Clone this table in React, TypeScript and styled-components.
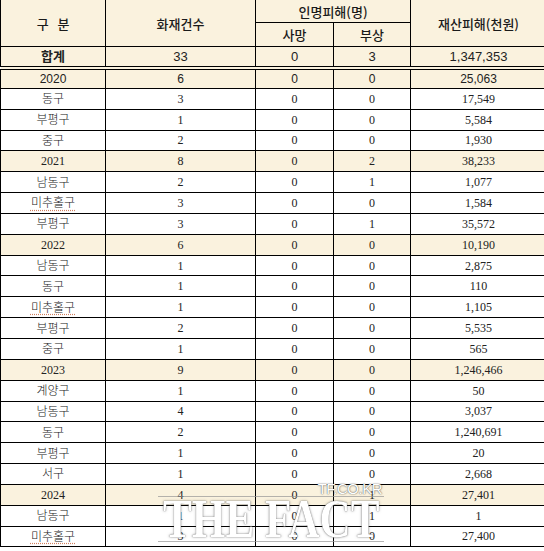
import React from "react";
import styled, { createGlobalStyle } from "styled-components";

const Global = createGlobalStyle`
  html, body { margin: 0; padding: 0; background: #ffffff; }
  body { width: 544px; height: 551px; overflow: hidden; }
`;

const Page = styled.div`
  position: relative;
  width: 544px;
  height: 551px;
  overflow: hidden;
  background: #fff;
`;

const Table = styled.table`
  border-collapse: collapse;
  table-layout: fixed;
  width: 546px;
  margin-left: 0;
  margin-top: -1px;
  font-family: "Liberation Serif", "Noto Sans CJK KR", serif;
  color: #222;
`;

const HeadCell = styled.th`
  background: #faf2de;
  border: 1px solid #000;
  font-family: "Noto Sans CJK KR", "Noto Sans", sans-serif;
  font-weight: 500;
  font-size: 13px;
  color: #1a1a1a;
  text-align: center;
  vertical-align: middle;
  padding: 0;
  line-height: 1;
  white-space: nowrap;
`;

const Row = styled.tr<{ $tone: "total" | "year" | "plain"; $double?: boolean }>`
  height: ${(p) => (p.$tone === "total" ? "21px" : "20.85px")};
  background: ${(p) => (p.$tone === "plain" ? "#ffffff" : "#faf2de")};
  & > td {
    border-bottom: ${(p) => (p.$double ? "4px double #000" : "1px solid #000")};
  }
`;

const Cell = styled.td<{ $sans?: boolean; $size?: number }>`
  border: 1px solid #000;
  padding: 0;
  text-align: center;
  vertical-align: middle;
  line-height: 1;
  white-space: nowrap;
  font-size: ${(p) => p.$size ?? 12}px;
  font-weight: 400;
  font-family: ${(p) =>
    p.$sans
      ? `"Liberation Sans", "Noto Sans CJK KR", sans-serif`
      : `"Liberation Serif", "Noto Sans CJK KR", serif`};
`;

const Region = styled.span<{ $squiggle?: boolean; $strong?: boolean }>`
  font-family: "Noto Sans CJK KR", sans-serif;
  font-size: ${(p) => (p.$strong ? 13 : 12)}px;
  font-weight: ${(p) => (p.$strong ? 700 : 300)};
  color: #222;
  text-decoration: ${(p) => (p.$squiggle ? "underline dotted #d08060" : "none")};
  text-underline-offset: 2px;
`;

const Watermark = styled.div`
  position: absolute;
  left: 158px;
  top: 478px;
  width: 226px;
  height: 66px;
  pointer-events: none;
`;

const WmSmall = styled.div`
  position: absolute;
  right: 2px;
  top: 2px;
  white-space: nowrap;
  font-family: "Liberation Sans", sans-serif;
  font-size: 15px;
  letter-spacing: -0.5px;
  color: #ffffff;
  text-shadow: 0 0 1px rgba(60, 60, 60, 0.9), 0 0 2px rgba(60, 60, 60, 0.5);
`;

const WmBig = styled.div`
  position: absolute;
  left: 0;
  top: 18px;
  width: 226px;
  height: 44px;
  border-top: 1px solid rgba(150, 150, 150, 0.7);
  border-bottom: 1px solid rgba(150, 150, 150, 0.7);
  display: flex;
  align-items: center;
  justify-content: center;
  overflow: visible;
`;

const WmText = styled.span`
  display: inline-block;
  white-space: nowrap;
  font-family: "Liberation Serif", serif;
  font-weight: 700;
  font-size: 54px;
  line-height: 1;
  transform: scaleX(0.8);
  color: #ffffff;
  text-shadow: 0 0 1px rgba(70, 70, 70, 0.9), 0 0 3px rgba(70, 70, 70, 0.5);
`;

type Data = {
  label: string;
  kind: "year" | "region";
  n: string;
  d: string;
  i: string;
  p: string;
  sans?: boolean;
};

const rows: Data[] = [
  { label: "2020", kind: "year", n: "6", d: "0", i: "0", p: "25,063", sans: true },
  { label: "동구", kind: "region", n: "3", d: "0", i: "0", p: "17,549" },
  { label: "부평구", kind: "region", n: "1", d: "0", i: "0", p: "5,584" },
  { label: "중구", kind: "region", n: "2", d: "0", i: "0", p: "1,930" },
  { label: "2021", kind: "year", n: "8", d: "0", i: "2", p: "38,233" },
  { label: "남동구", kind: "region", n: "2", d: "0", i: "1", p: "1,077" },
  { label: "미추홀구", kind: "region", n: "3", d: "0", i: "0", p: "1,584" },
  { label: "부평구", kind: "region", n: "3", d: "0", i: "1", p: "35,572" },
  { label: "2022", kind: "year", n: "6", d: "0", i: "0", p: "10,190" },
  { label: "남동구", kind: "region", n: "1", d: "0", i: "0", p: "2,875" },
  { label: "동구", kind: "region", n: "1", d: "0", i: "0", p: "110" },
  { label: "미추홀구", kind: "region", n: "1", d: "0", i: "0", p: "1,105" },
  { label: "부평구", kind: "region", n: "2", d: "0", i: "0", p: "5,535" },
  { label: "중구", kind: "region", n: "1", d: "0", i: "0", p: "565" },
  { label: "2023", kind: "year", n: "9", d: "0", i: "0", p: "1,246,466" },
  { label: "계양구", kind: "region", n: "1", d: "0", i: "0", p: "50" },
  { label: "남동구", kind: "region", n: "4", d: "0", i: "0", p: "3,037" },
  { label: "동구", kind: "region", n: "2", d: "0", i: "0", p: "1,240,691" },
  { label: "부평구", kind: "region", n: "1", d: "0", i: "0", p: "20" },
  { label: "서구", kind: "region", n: "1", d: "0", i: "0", p: "2,668" },
  { label: "2024", kind: "year", n: "4", d: "0", i: "1", p: "27,401" },
  { label: "남동구", kind: "region", n: "1", d: "0", i: "1", p: "1" },
  { label: "미추홀구", kind: "region", n: "3", d: "0", i: "0", p: "27,400" },
];

export default function App() {
  return (
    <Page>
      <Global />
      <Table>
        <colgroup>
          <col style={{ width: 105 }} />
          <col style={{ width: 150 }} />
          <col style={{ width: 78 }} />
          <col style={{ width: 77 }} />
          <col style={{ width: 136 }} />
        </colgroup>
        <thead>
          <tr style={{ height: 23 }}>
            <HeadCell rowSpan={2}>구&nbsp;&nbsp;&nbsp;분</HeadCell>
            <HeadCell rowSpan={2}>화재건수</HeadCell>
            <HeadCell colSpan={2}>인명피해(명)</HeadCell>
            <HeadCell rowSpan={2}>재산피해(천원)</HeadCell>
          </tr>
          <tr style={{ height: 24 }}>
            <HeadCell>사망</HeadCell>
            <HeadCell>부상</HeadCell>
          </tr>
        </thead>
        <tbody>
          <Row $tone="total" $double>
            <Cell $sans $size={13}>
              <Region $strong>합계</Region>
            </Cell>
            <Cell $sans $size={13}>33</Cell>
            <Cell $sans $size={13}>0</Cell>
            <Cell $sans $size={13}>3</Cell>
            <Cell $sans $size={13}>1,347,353</Cell>
          </Row>
          {rows.map((r, idx) => (
            <Row key={idx} $tone={r.kind === "year" ? "year" : "plain"}>
              <Cell $sans={r.sans}>
                {r.kind === "year" ? (
                  r.label
                ) : (
                  <Region $squiggle={r.label === "미추홀구"}>{r.label}</Region>
                )}
              </Cell>
              <Cell $sans={r.sans}>{r.n}</Cell>
              <Cell $sans={r.sans}>{r.d}</Cell>
              <Cell $sans={r.sans}>{r.i}</Cell>
              <Cell $sans={r.sans}>{r.p}</Cell>
            </Row>
          ))}
        </tbody>
      </Table>
      <Watermark>
        <WmSmall>TF.CO.KR</WmSmall>
        <WmBig>
          <WmText>THE FACT</WmText>
        </WmBig>
      </Watermark>
    </Page>
  );
}
